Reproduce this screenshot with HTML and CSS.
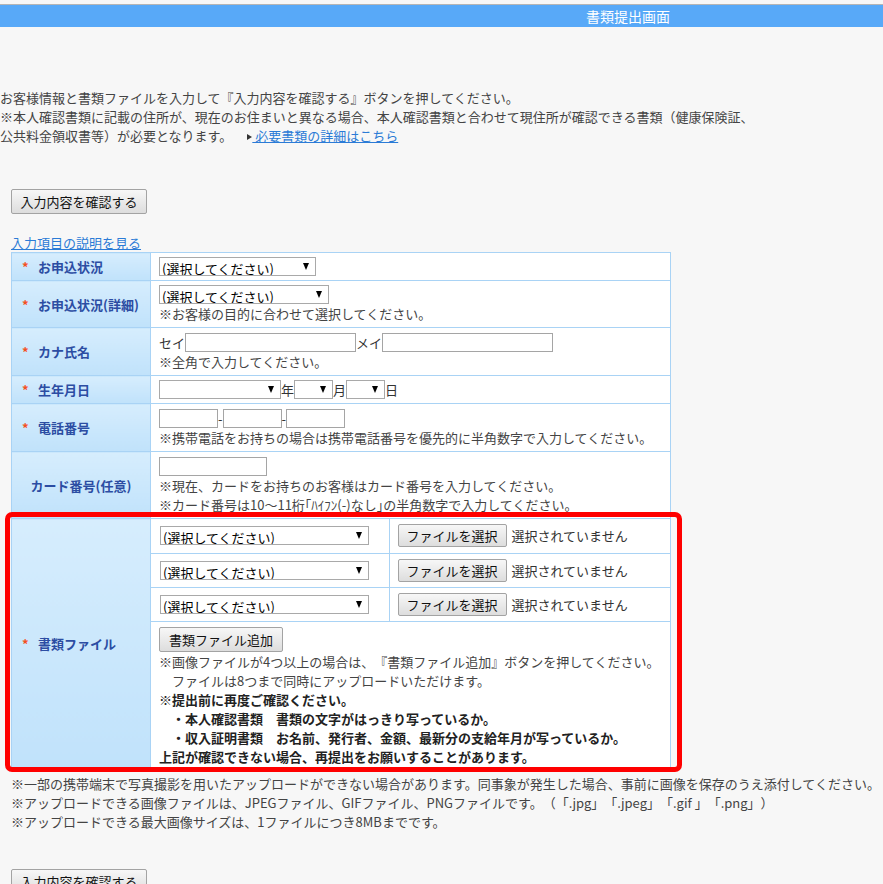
FILE: index.html
```html
<!DOCTYPE html>
<html lang="ja">
<head>
<meta charset="utf-8">
<title>書類提出画面</title>
<link rel="stylesheet" href="styles.css">
</head>
<body>
<header class="topbar"><h1 class="title">書類提出画面</h1></header>

<div class="intro">
  <p>お客様情報と書類ファイルを入力して『入力内容を確認する』ボタンを押してください。</p>
  <p>※本人確認書類に記載の住所が、現在のお住まいと異なる場合、本人確認書類と合わせて現住所が確認できる書類（健康保険証、</p>
  <p>公共料金領収書等）が必要となります。<span class="tri"></span><a class="link" href="#">&nbsp;必要書類の詳細はこちら</a></p>
</div>

<div class="content">
  <button class="btn btn-main" type="button">入力内容を確認する</button>
  <div class="helplink"><a class="link" href="#">入力項目の説明を見る</a></div>

  <table class="form">
    <colgroup><col class="col-label"><col class="col-field"></colgroup>
    <tr>
      <th><span class="req">*</span>お申込状況</th>
      <td><div class="ctrl"><span class="sel w157"><select><option>(選択してください)</option></select></span></div></td>
    </tr>
    <tr>
      <th><span class="req">*</span>お申込状況(詳細)</th>
      <td>
        <div class="ctrl"><span class="sel w170"><select><option>(選択してください)</option></select></span></div>
        <div class="note">※お客様の目的に合わせて選択してください。</div>
      </td>
    </tr>
    <tr>
      <th><span class="req">*</span>カナ氏名</th>
      <td>
        <div class="ctrl ctrl-txt">セイ<input class="txt w171" type="text">メイ<input class="txt w171" type="text"></div>
        <div class="note">※全角で入力してください。</div>
      </td>
    </tr>
    <tr>
      <th><span class="req">*</span>生年月日</th>
      <td><div class="ctrl"><span class="sel w122"><select><option></option></select></span>年<span class="sel w39"><select><option></option></select></span>月<span class="sel w39"><select><option></option></select></span>日</div></td>
    </tr>
    <tr>
      <th><span class="req">*</span>電話番号</th>
      <td>
        <div class="ctrl ctrl-txt"><input class="txt w59" type="text">-<input class="txt w59" type="text">-<input class="txt w59" type="text"></div>
        <div class="note">※携帯電話をお持ちの場合は携帯電話番号を優先的に半角数字で入力してください。</div>
      </td>
    </tr>
    <tr>
      <th class="center">カード番号(任意)</th>
      <td>
        <div class="ctrl ctrl-txt"><input class="txt w108" type="text"></div>
        <div class="note">※現在、カードをお持ちのお客様はカード番号を入力してください。</div>
        <div class="note">※カード番号は10～11桁｢ﾊｲﾌﾝ(-)なし｣の半角数字で入力してください。</div>
      </td>
    </tr>
    <tr>
      <th><span class="req">*</span>書類ファイル</th>
      <td class="filecell">
        <table class="files">
          <tr>
            <td class="fsel"><span class="sel w209"><select><option>(選択してください)</option></select></span></td>
            <td class="fbtn"><button class="btn btn-file" type="button">ファイルを選択</button><span class="nofile">選択されていません</span></td>
          </tr>
          <tr>
            <td class="fsel"><span class="sel w209"><select><option>(選択してください)</option></select></span></td>
            <td class="fbtn"><button class="btn btn-file" type="button">ファイルを選択</button><span class="nofile">選択されていません</span></td>
          </tr>
          <tr>
            <td class="fsel"><span class="sel w209"><select><option>(選択してください)</option></select></span></td>
            <td class="fbtn"><button class="btn btn-file" type="button">ファイルを選択</button><span class="nofile">選択されていません</span></td>
          </tr>
          <tr>
            <td class="fadd" colspan="2">
              <button class="btn btn-add" type="button">書類ファイル追加</button>
              <div class="note">※画像ファイルが4つ以上の場合は、『書類ファイル追加』ボタンを押してください。</div>
              <div class="note">　ファイルは8つまで同時にアップロードいただけます。</div>
              <div class="strong">※提出前に再度ご確認ください。</div>
              <div class="strong">　・本人確認書類　書類の文字がはっきり写っているか。</div>
              <div class="strong">　・収入証明書類　お名前、発行者、金額、最新分の支給年月が写っているか。</div>
              <div class="strong">上記が確認できない場合、再提出をお願いすることがあります。</div>
            </td>
          </tr>
        </table>
      </td>
    </tr>
  </table>

  <div class="notes">
    <p>※一部の携帯端末で写真撮影を用いたアップロードができない場合があります。同事象が発生した場合、事前に画像を保存のうえ添付してください。</p>
    <p>※アップロードできる画像ファイルは、JPEGファイル、GIFファイル、PNGファイルです。（「.jpg」「.jpeg」「.gif 」「.png」）</p>
    <p>※アップロードできる最大画像サイズは、1ファイルにつき8MBまでです。</p>
  </div>

  <button class="btn btn-main btn-bottom" type="button">入力内容を確認する</button>
</div>

<div class="highlight"></div>
</body>
</html>
```

FILE: styles.css
```css
* { box-sizing: border-box; }

body {
  margin: 0;
  background: #f7f7f7;
  font-family: "Noto Sans CJK JP", sans-serif;
  font-size: 13px;
  line-height: 19px;
  color: #444;
  position: relative;
  overflow: hidden;
  text-spacing-trim: space-all;
}

.topbar {
  margin-top: 4px;
  height: 23px;
  border-top: 1px solid #b5b5b5;
  background: #58a9f8;
  padding-left: 586px;
}

.title {
  margin: 0;
  font-size: 14px;
  font-weight: normal;
  line-height: 22px;
  color: #fff;
}

.intro {
  margin-top: 61px;
  white-space: nowrap;
}

.intro p { margin: 0; }

.tri {
  display: inline-block;
  width: 0;
  height: 0;
  margin-left: 15px;
  border-left: 5px solid #333;
  border-top: 3px solid transparent;
  border-bottom: 3px solid transparent;
  vertical-align: 1px;
}

.link {
  color: #2b7bd6;
  text-decoration: underline;
}

.content { padding-left: 11px; }

.btn {
  font-family: "Noto Sans CJK JP", sans-serif;
  font-size: 13px;
  color: #111;
  background: linear-gradient(#f7f7f7, #dddddd);
  border: 1px solid #a3a3a3;
  border-radius: 2px;
  padding: 0 7px;
  line-height: 1;
  cursor: pointer;
  text-spacing-trim: space-all;
}

.btn-main {
  display: block;
  margin-top: 44px;
  height: 25px;
  width: 136px;
  padding: 0;
}

.btn-bottom { margin-top: 38px; }

.helplink { margin-top: 19px; }

.form {
  border-collapse: collapse;
  table-layout: fixed;
  width: 660px;
}

.col-label { width: 139px; }

.form th,
.form td {
  border: 1px solid #a9d3f5;
}

.form th {
  background: linear-gradient(#d6edfd, #c0e2fb);
  color: #2c4da3;
  font-weight: bold;
  text-align: left;
  padding: 0 4px 0 10px;
  vertical-align: middle;
  white-space: nowrap;
}

.form th.center {
  text-align: center;
  padding: 0;
}

.req {
  display: inline-block;
  width: 16px;
  color: #f4511e;
  font-weight: bold;
}

.form td {
  background: #fff;
  padding: 4px 8px;
  vertical-align: top;
  white-space: nowrap;
}

.ctrl {
  height: 19px;
  display: flex;
  align-items: center;
  color: #333;
}

.ctrl-txt {
  height: 20px;
  padding-top: 1px;
}

.note { color: #444; }

.strong {
  color: #222;
  font-weight: bold;
}

.sel {
  position: relative;
  display: inline-block;
  height: 19px;
}

.sel select {
  -webkit-appearance: none;
  appearance: none;
  width: 100%;
  height: 19px;
  border: 1px solid #a9a9a9;
  border-radius: 0;
  background: #fff;
  color: #000;
  font-family: "Noto Sans CJK JP", sans-serif;
  font-size: 13px;
  padding: 1px 16px 0 2px;
  margin: 0;
}

.sel::after {
  content: "";
  position: absolute;
  right: 7px;
  top: 6px;
  width: 0;
  height: 0;
  border-left: 3px solid transparent;
  border-right: 3px solid transparent;
  border-top: 7px solid #000;
  pointer-events: none;
}

.w157 { width: 157px; }
.w170 { width: 170px; }
.w122 { width: 122px; }
.w39 { width: 39px; }
.w209 { width: 209px; }

.txt {
  height: 19px;
  border: 1px solid #a5a5a5;
  background: #fff;
  margin: 0;
  padding: 0 2px;
  font-family: "Noto Sans CJK JP", sans-serif;
  font-size: 13px;
}

.w171 { width: 171px; }
.w59 { width: 59px; }
.w108 { width: 108px; }

.form td.filecell {
  padding: 0;
}

.files {
  width: 100%;
  border-collapse: collapse;
}

.files td {
  border: none;
  border-bottom: 1px solid #a9d3f5;
  height: 34px;
  padding: 0 8px;
  vertical-align: middle;
}

.files td.fsel {
  width: 238px;
  padding: 2px 8px 0 9px;
}

.files td.fbtn {
  border-left: 1px solid #a9d3f5;
  padding: 0 8px;
}

.btn-file {
  height: 23px;
  width: 109px;
  padding: 0;
  vertical-align: middle;
}

.nofile {
  margin-left: 5px;
  color: #333;
  vertical-align: middle;
}

.files td.fadd {
  border-bottom: none;
  height: auto;
  padding: 5px 8px 3px;
  vertical-align: top;
}

.btn-add {
  display: block;
  height: 25px;
  width: 124px;
  padding: 0;
}

.notes {
  margin-top: 4px;
  white-space: nowrap;
}

.notes p { margin: 0; }

.highlight {
  position: absolute;
  left: 5px;
  top: 512px;
  width: 677px;
  height: 260px;
  border: 5px solid #ff0000;
  border-radius: 7px;
  pointer-events: none;
}
```
